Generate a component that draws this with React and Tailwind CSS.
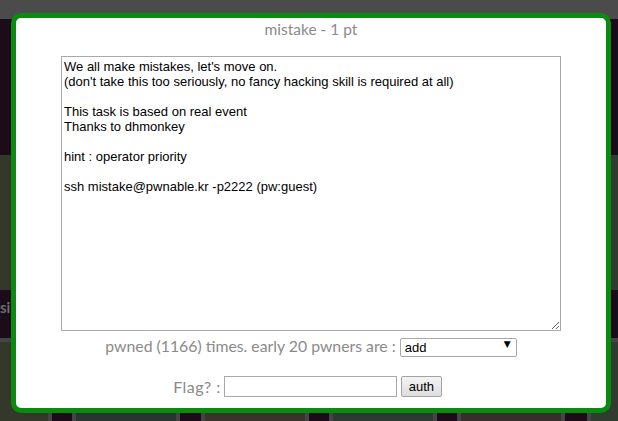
const desc = `We all make mistakes, let's move on.
(don't take this too seriously, no fancy hacking skill is required at all)

This task is based on real event
Thanks to dhmonkey

hint : operator priority

ssh mistake@pwnable.kr -p2222 (pw:guest)`;

const cols = [-52, 76, 205, 333, 461, 591];
const tones = ["#34382a", "#283530", "#3a332b", "#2d3a34", "#382f2c", "#2f3c2f"];

function TileRow({ top, height }) {
  return (
    <div className="absolute left-0 w-full" style={{ top, height }}>
      {cols.map((x, i) => (
        <div
          key={x}
          className="absolute top-0 h-full border-x-4 border-[#454545]"
          style={{ left: x - 4, width: 108, background: tones[i] }}
        />
      ))}
    </div>
  );
}

export default function App() {
  return (
    <div className="relative w-[618px] h-[421px] overflow-hidden bg-[#1c0b19]">
      <div className="h-[19px] bg-[#4b4b4b]" />
      <TileRow top={155} height={135} />
      <div className="absolute left-0 top-[338px] w-full h-[4px] bg-[#454545]" />
      <TileRow top={342} height={79} />
      <div className="absolute left-0 top-[296px] text-[15px] font-bold text-[#6b6b6b] font-['Lato',sans-serif]">
        si
      </div>

      <div className="absolute left-[11px] top-[13px] w-[600px] h-[400px] rounded-[10px] border-[5px] border-[#0a8a0f] bg-white flex flex-col items-center">
        <div className="pt-[1px] leading-[20px] text-[15.5px] text-[#8a8a8a] font-['Lato',sans-serif]">
          mistake - 1 pt
        </div>
        <textarea
          readOnly
          defaultValue={desc}
          className="mt-[17px] w-[500px] h-[275px] border border-[#a9a9a9] p-[2px] text-[13px] leading-[15px] text-black font-['Liberation_Sans',Arial,sans-serif] outline-none"
        />
        <div className="mt-[5px] flex items-center h-[19px] font-['Lato',sans-serif] text-[15.8px] text-[#8a8a8a]">
          <span>pwned (1166) times. early 20 pwners are :</span>
          <div className="relative ml-[4px]">
            <select className="appearance-none w-[117px] h-[19px] border border-[#a9a9a9] rounded-[2px] bg-white pl-[4px] text-[13px] leading-[17px] text-black font-['Liberation_Sans',Arial,sans-serif] outline-none">
              <option>add</option>
            </select>
            <span className="absolute right-[6px] top-[4px] text-[9px] text-black pointer-events-none font-['DejaVu_Sans',sans-serif]">▼</span>
          </div>
        </div>
        <div className="mt-[21px] pr-[7px] flex items-center h-[21px] font-['Lato',sans-serif] text-[16px] text-[#8a8a8a]">
          <span className="tracking-[0.5px]">Flag? :</span>
          <input className="ml-[3px] w-[173px] h-[21px] border border-[#a9a9a9] bg-white outline-none" />
          <button className="ml-[4px] w-[41px] h-[21px] rounded-[2px] border border-[#a3a3a3] bg-gradient-to-b from-[#f4f4f4] to-[#dedede] text-[13px] text-black font-['Liberation_Sans',Arial,sans-serif]">
            auth
          </button>
        </div>
      </div>
    </div>
  );
}
